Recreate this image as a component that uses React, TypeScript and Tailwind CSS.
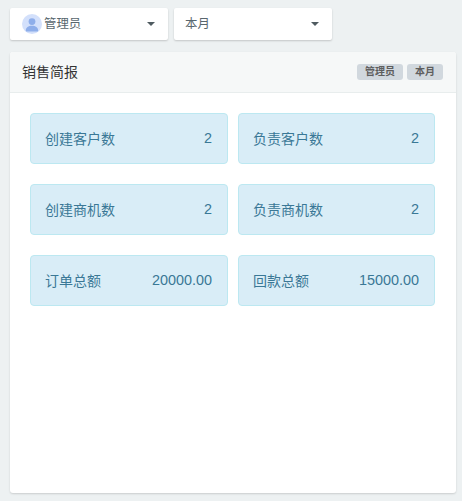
import React from 'react';

const FONT = "font-['Liberation_Sans','Noto_Sans_CJK_SC',sans-serif]";

interface Stat {
  label: string;
  value: string;
}

const stats: Stat[] = [
  { label: '创建客户数', value: '2' },
  { label: '负责客户数', value: '2' },
  { label: '创建商机数', value: '2' },
  { label: '负责商机数', value: '2' },
  { label: '订单总额', value: '20000.00' },
  { label: '回款总额', value: '15000.00' },
];

const Caret = () => (
  <svg width="8" height="4" viewBox="0 0 8 4" className="shrink-0">
    <path d="M0 0h8L4 4z" fill="#4f5b60" />
  </svg>
);

const Avatar = () => (
  <div className="w-5 h-5 rounded-full bg-[#d3e0fb] overflow-hidden shrink-0">
    <svg width="20" height="20" viewBox="0 0 20 20">
      <circle cx="10" cy="7.6" r="3.4" fill="#8eaeea" />
      <path d="M3.8 17c0-3.6 2.6-5.2 6.2-5.2s6.2 1.600 6.2 5.200c0 .4-.3.600-.6.600H4.400c-.3 0-.6-.2-.6-.6z" fill="#8eaeea" />
    </svg>
  </div>
);

const Select: React.FC<{ children: React.ReactNode; className?: string }> = ({ children, className }) => (
  <div className={`w-[158px] h-[32px] bg-white rounded-[2px] shadow-[0_1px_2px_rgba(0,0,0,0.18)] flex items-center justify-between pr-[13px] ${className ?? ''}`}>
    <div className="flex items-center min-w-0">{children}</div>
    <Caret />
  </div>
);

const Badge: React.FC<{ children: React.ReactNode }> = ({ children }) => (
  <span className="h-4 px-2 rounded-[3px] bg-[#d1d8de] text-[10px] leading-4 font-bold text-[#5e5e5e]">{children}</span>
);

export default function App() {
  return (
    <div className={`w-[462px] h-[501px] overflow-hidden bg-[#edf1f2] px-[10px] pt-2 ${FONT}`}>
      <div className="flex gap-[6px]">
        <Select className="pl-3">
          <Avatar />
          <span className="ml-[2px] text-[12.4px] text-[#58666e]">管理员</span>
        </Select>
        <Select className="pl-[11px]">
          <span className="text-[12.4px] text-[#58666e]">本月</span>
        </Select>
      </div>

      <div className="mt-3 w-[446px] h-[441px] bg-white rounded-[3px] shadow-[0_1px_2px_rgba(0,0,0,0.15)]">
        <div className="h-[41px] bg-[#f6f8f8] border-b border-[#e8eded] rounded-t-[3px] flex items-center justify-between pl-3 pr-[13px]">
          <span className="text-sm text-[#333]">销售简报</span>
          <div className="flex gap-1">
            <Badge>管理员</Badge>
            <Badge>本月</Badge>
          </div>
        </div>
        <div className="grid grid-cols-[198px_197px] gap-x-[10px] gap-y-5 pl-5 pt-5">
          {stats.map((s) => (
            <div
              key={s.label}
              className="h-[51px] bg-[#d9edf7] border border-[#bce8f1] rounded-[4px] flex items-center justify-between pl-[14px] pr-[15px] text-[#3a7896]"
            >
              <span className="text-sm">{s.label}</span>
              <span className="text-[14.4px]">{s.value}</span>
            </div>
          ))}
        </div>
      </div>
    </div>
  );
}
